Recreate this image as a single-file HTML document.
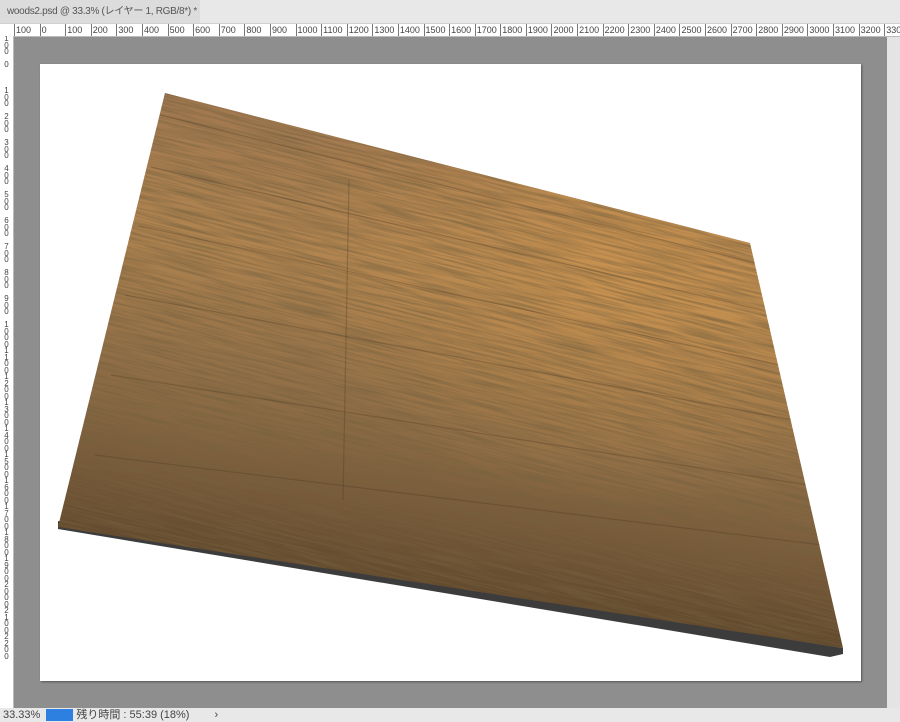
<!DOCTYPE html>
<html><head><meta charset="utf-8"><style>
html,body{margin:0;padding:0;width:900px;height:722px;overflow:hidden;background:#e6e6e6;font-family:"Liberation Sans","Noto Sans CJK JP",sans-serif;}
.tabbar{position:absolute;left:0;top:0;width:900px;height:23px;background:#e8e8e8;border-bottom:1px solid #d0d0d0;}
.tab{position:absolute;left:0;top:0;width:200px;height:23px;background:#dcdcdc;font-size:10px;letter-spacing:-0.3px;color:#555;line-height:23px;padding-left:7px;box-sizing:border-box;white-space:nowrap;overflow:hidden;}
.hr{position:absolute;left:14px;top:24px;width:886px;height:12px;background:#fff;border-bottom:1px solid #bbb;font-size:9px;color:#444;line-height:12px;overflow:hidden;white-space:nowrap;}
.hr span{display:inline-block;width:25.6px;border-left:1px solid #777;padding-left:1px;box-sizing:border-box;}
.vr{position:absolute;left:0;top:36px;width:13px;height:672px;background:#fff;border-right:1px solid #bbb;font-size:8px;color:#444;line-height:6.5px;text-align:center;overflow:hidden;}
.canvas{position:absolute;left:14px;top:37px;width:873px;height:671px;background:#8e8e8e;}
.doc{position:absolute;left:40px;top:64px;width:821px;height:617px;background:#fff;box-shadow:1px 1px 2px rgba(0,0,0,.4);}
.sb{position:absolute;left:887px;top:37px;width:13px;height:671px;background:#e4e4e4;}
.status{position:absolute;left:0;top:708px;width:900px;height:14px;background:#e8e8e8;font-size:11px;color:#444;line-height:14px;white-space:nowrap;overflow:hidden;}
</style></head><body>
<div class="tabbar"><div class="tab">woods2.psd @ 33.3% (レイヤー 1, RGB/8*) * &nbsp;×</div></div>
<div style="position:absolute;left:0;top:24px;width:14px;height:12px;background:#fff;border-right:1px solid #bbb;border-bottom:1px solid #bbb"></div>
<div class="hr"><span>100</span><span>0</span><span>100</span><span>200</span><span>300</span><span>400</span><span>500</span><span>600</span><span>700</span><span>800</span><span>900</span><span>1000</span><span>1100</span><span>1200</span><span>1300</span><span>1400</span><span>1500</span><span>1600</span><span>1700</span><span>1800</span><span>1900</span><span>2000</span><span>2100</span><span>2200</span><span>2300</span><span>2400</span><span>2500</span><span>2600</span><span>2700</span><span>2800</span><span>2900</span><span>3000</span><span>3100</span><span>3200</span><span>3300</span></div>
<div class="vr">1<br>0<br>0<br><br>0<br><br><br><br>1<br>0<br>0<br><br>2<br>0<br>0<br><br>3<br>0<br>0<br><br>4<br>0<br>0<br><br>5<br>0<br>0<br><br>6<br>0<br>0<br><br>7<br>0<br>0<br><br>8<br>0<br>0<br><br>9<br>0<br>0<br><br>1<br>0<br>0<br>0<br>1<br>1<br>0<br>0<br>1<br>2<br>0<br>0<br>1<br>3<br>0<br>0<br>1<br>4<br>0<br>0<br>1<br>5<br>0<br>0<br>1<br>6<br>0<br>0<br>1<br>7<br>0<br>0<br>1<br>8<br>0<br>0<br>1<br>9<br>0<br>0<br>2<br>0<br>0<br>0<br>2<br>1<br>0<br>0<br>2<br>2<br>0<br>0</div>
<div class="canvas"></div>
<div class="sb"></div>
<div class="doc"></div>
<svg style="position:absolute;left:0;top:0" width="900" height="722">
<defs>
<linearGradient id="g" x1="0.2" y1="0" x2="0" y2="1">
<stop offset="0" stop-color="#a07850"/><stop offset="0.25" stop-color="#b08450"/><stop offset="0.55" stop-color="#8a6a45"/><stop offset="0.8" stop-color="#634a2e"/><stop offset="1" stop-color="#4a3420"/></linearGradient>
<radialGradient id="hl" cx="0.75" cy="0.3" r="0.45">
<stop offset="0" stop-color="#e0a050" stop-opacity="0.55"/><stop offset="1" stop-color="#e0a050" stop-opacity="0"/></radialGradient>
<filter id="n" x="0" y="0" width="100%" height="100%"><feTurbulence type="fractalNoise" baseFrequency="0.015 0.45" numOctaves="3" seed="3"/><feColorMatrix values="0 0 0 0 0.18  0 0 0 0 0.12  0 0 0 0 0.05  0 0 0 1.6 -0.55"/></filter>
<clipPath id="c"><polygon points="165,93 750,243 843,648 58,527"/></clipPath>
</defs>
<polygon points="58,521 843,648 843,654 830,657 58,529" fill="#3c3c3c"/>
<polygon points="165,93 750,243 843,648 58,527" fill="url(#g)"/>
<g clip-path="url(#c)">
<polygon points="165,93 750,243 843,648 58,527" fill="url(#hl)"/>
<rect x="-100" y="-100" width="1100" height="922" filter="url(#n)" transform="rotate(14 450 360)" opacity="0.85"/>
<g stroke="#4a3520" stroke-opacity="0.3" stroke-width="1.2" fill="none">
<line x1="160" y1="115" x2="755" y2="263"/>
<line x1="151" y1="167" x2="766" y2="311"/>
<line x1="139" y1="226" x2="780" y2="365"/>
<line x1="125" y1="295" x2="793" y2="420"/>
<line x1="111" y1="375" x2="808" y2="485"/>
<line x1="95" y1="455" x2="822" y2="545"/>
<line x1="349" y1="180" x2="343" y2="500"/>
</g>
</g>
</svg>
<div class="status"><span style="padding-left:3px">33.33%</span><span style="display:inline-block;width:27px;height:12px;background:#2d7fe0;vertical-align:middle;margin-left:6px"></span> 残り時間 : 55:39 (18%) <span style="margin-left:22px">›</span></div>
</body></html>
